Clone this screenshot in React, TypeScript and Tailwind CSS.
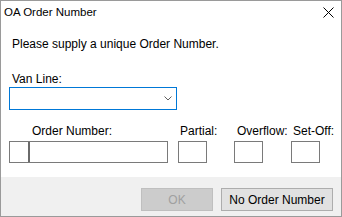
import React from "react";

export default function App() {
  const font = { fontFamily: '"Liberation Sans", Arial, sans-serif' };
  return (
    <div
      className="w-[342px] h-[217px] border border-[#9a9a9a] bg-white flex flex-col text-black overflow-hidden"
      style={font}
    >
      {/* Title bar */}
      <div className="h-[30px] flex justify-between">
        <div className="pl-[3px] pt-[5px] text-[11.5px] leading-[13px]">OA Order Number</div>
        <div className="pr-[7px] pt-[6px]">
          <svg width="11" height="11" viewBox="0 0 11 11">
            <path d="M0.5 0.5 L10.5 10.5 M10.5 0.5 L0.5 10.5" stroke="#000" strokeWidth="1" fill="none" />
          </svg>
        </div>
      </div>

      {/* Body */}
      <div className="h-[146px] flex flex-col text-[12px] leading-[14px]">
        <div className="mt-[6px] pl-[11px]">Please supply a unique Order Number.</div>
        <div className="mt-[21px] pl-[11px]">Van Line:</div>
        <div className="mt-[1px] ml-[8px] w-[168px] h-[23px] border border-[#0078d7] flex items-center justify-end pr-[4px]">
          <svg width="8" height="5" viewBox="0 0 8 5">
            <path d="M0.5 0.5 L4 4 L7.5 0.5" stroke="#606060" strokeWidth="1" fill="none" />
          </svg>
        </div>
        <div className="mt-[14px] flex h-[14px]">
          <span className="ml-[31px] w-[148px]">Order Number:</span>
          <span className="w-[57px]">Partial:</span>
          <span className="w-[56px]">Overflow:</span>
          <span>Set-Off:</span>
        </div>
        <div className="mt-[3px] flex h-[22px]">
          <div className="ml-[8px] w-[159px] h-[22px] border border-[#7a7a7a] flex">
            <div className="w-[20px] h-full border-r-2 border-[#6a6a6a]" />
          </div>
          <div className="ml-[10px] w-[29px] h-[22px] border border-[#7a7a7a]" />
          <div className="ml-[27px] w-[29px] h-[22px] border border-[#7a7a7a]" />
          <div className="ml-[28px] w-[29px] h-[22px] border border-[#7a7a7a]" />
        </div>
      </div>

      {/* Footer */}
      <div className="h-[39px] bg-[#f0f0f0] flex justify-end items-start pt-[11px] pr-[8px] gap-[8px] text-[12px]">
        <div className="w-[72px] h-[23px] bg-[#cccccc] border border-[#bfbfbf] text-[#a0a0a0] flex items-center justify-center">
          OK
        </div>
        <div className="w-[112px] h-[23px] bg-[#e1e1e1] border border-[#adadad] flex items-center justify-center">
          No Order Number
        </div>
      </div>
    </div>
  );
}
